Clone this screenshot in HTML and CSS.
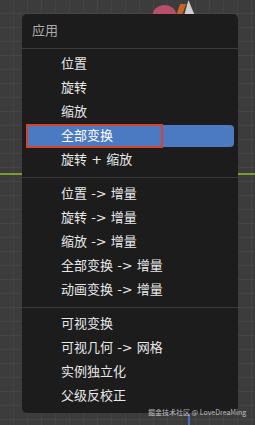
FILE: index.html
```html
<!DOCTYPE html>
<html lang="zh-CN">
<head>
<meta charset="utf-8">
<link rel="stylesheet" href="styles.css">
</head>
<body>
<div class="viewport">
  <div class="axis-green"></div>
  <div class="axis-blue"></div>
  <div class="blob-pink"></div>
  <div class="beak-orange"></div>
  <div class="beak-white"></div>
  <div class="menu">
    <div class="menu-title">应用</div>
    <div class="group">
      <div class="item">位置</div>
      <div class="item">旋转</div>
      <div class="item">缩放</div>
      <div class="item active">全部变换</div>
      <div class="item">旋转 + 缩放</div>
    </div>
    <div class="sep"></div>
    <div class="group">
      <div class="item">位置 -&gt; 增量</div>
      <div class="item">旋转 -&gt; 增量</div>
      <div class="item">缩放 -&gt; 增量</div>
      <div class="item">全部变换 -&gt; 增量</div>
      <div class="item">动画变换 -&gt; 增量</div>
    </div>
    <div class="sep"></div>
    <div class="group">
      <div class="item">可视变换</div>
      <div class="item">可视几何 -&gt; 网格</div>
      <div class="item">实例独立化</div>
      <div class="item">父级反校正</div>
    </div>
  </div>
  <div class="watermark">掘金技术社区 @ LoveDreaMing</div>
</div>
</body>
</html>
```

FILE: styles.css
```css
html, body {
  margin: 0;
  padding: 0;
}
body {
  width: 255px;
  height: 425px;
  overflow: hidden;
  font-family: "DejaVu Sans", "Noto Sans CJK SC", sans-serif;
}
.viewport {
  position: relative;
  width: 255px;
  height: 425px;
  box-sizing: border-box;
  padding: 14px 17px 0 22px;
  background-color: #3c3c3c;
  background-image:
    repeating-linear-gradient(to bottom, transparent 0, transparent 13px, #454545 13px, #454545 14px),
    repeating-linear-gradient(to right, transparent 0, transparent 13px, #444444 13px, #444444 14px);
}
.axis-green {
  position: absolute;
  left: 0;
  right: 0;
  top: 173px;
  height: 2px;
  background: #7c9c2e;
}
.axis-blue {
  position: absolute;
  left: 188px;
  top: 414px;
  width: 2px;
  height: 11px;
  background: #4a6cb4;
}
.blob-pink {
  position: absolute;
  left: 153px;
  top: 5px;
  width: 23px;
  height: 18px;
  border-radius: 50% 50% 0 0;
  background: #b8506a;
}
.beak-orange {
  position: absolute;
  left: 178px;
  top: 4px;
  width: 6px;
  height: 12px;
  background: #c8642a;
  transform: skewX(-20deg);
}
.beak-white {
  position: absolute;
  left: 184px;
  top: 0;
  width: 11px;
  height: 16px;
  background: #cfcfcf;
  clip-path: polygon(40% 0, 100% 100%, 0 100%);
}
.menu {
  position: relative;
  width: 216px;
  height: 399px;
  box-sizing: border-box;
  background: #1c1c1c;
  border-radius: 5px;
  padding-bottom: 5px;
}
.menu-title {
  height: 34px;
  line-height: 33px;
  padding-left: 10px;
  font-size: 13px;
  color: #ababab;
  border-bottom: 1px solid #3c3c3c;
  box-sizing: content-box;
}
.group {
  display: flex;
  flex-direction: column;
}
.menu-title + .group {
  padding-top: 3px;
}
.item {
  position: relative;
  height: 22px;
  line-height: 22px;
  margin: 1px 4px 1px 5px;
  padding-left: 34px;
  font-size: 13px;
  color: #e8e8e8;
  border-radius: 4px;
  white-space: pre;
}
.item.active {
  background: #4b7ac2;
  color: #ffffff;
}
.item.active::after {
  content: "";
  position: absolute;
  left: -1px;
  top: -1px;
  width: 137px;
  height: 24px;
  box-sizing: border-box;
  border: 2px solid #d2452c;
}
.sep {
  height: 1px;
  margin: 5px 0 4px;
  background: #3a3a3a;
}
.watermark {
  position: absolute;
  left: 148px;
  top: 406px;
  font-family: "Noto Sans CJK SC", sans-serif;
  font-size: 7px;
  line-height: 12px;
  color: rgba(235, 235, 235, 0.75);
  white-space: nowrap;
}
```
